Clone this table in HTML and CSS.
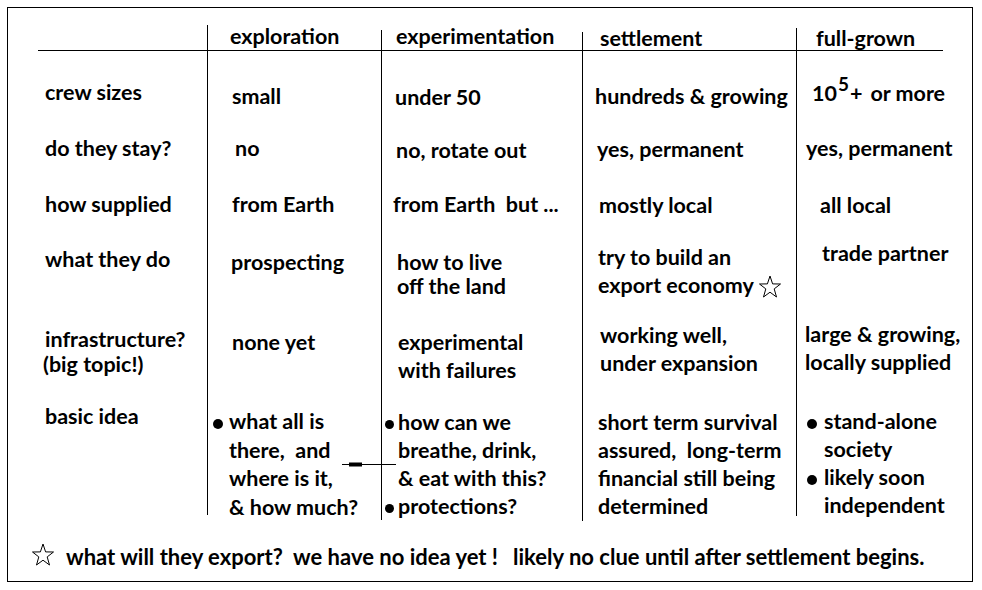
FILE: index.html
```html
<!DOCTYPE html>
<html lang="en">
<head>
<meta charset="utf-8">
<title>Settlement stages</title>
<link rel="stylesheet" href="styles.css">
</head>
<body>
<div class="slide">
  <div class="grid">
    <div class="row head">
      <div class="cell c0"></div>
      <div class="cell c1">exploration</div>
      <div class="cell c2">experimentation</div>
      <div class="cell c3">settlement</div>
      <div class="cell c4">full-grown</div>
    </div>
    <div class="row r1">
      <div class="cell c0">crew sizes</div>
      <div class="cell c1">small</div>
      <div class="cell c2">under 50</div>
      <div class="cell c3">hundreds &amp; growing</div>
      <div class="cell c4">10<sup class="exp">5</sup>+<span class="gap">or more</span></div>
    </div>
    <div class="row r2">
      <div class="cell c0">do they stay?</div>
      <div class="cell c1">no</div>
      <div class="cell c2">no,&nbsp;rotate out</div>
      <div class="cell c3">yes, permanent</div>
      <div class="cell c4">yes, permanent</div>
    </div>
    <div class="row r3">
      <div class="cell c0">how supplied</div>
      <div class="cell c1">from Earth</div>
      <div class="cell c2">from Earth&nbsp; but ...</div>
      <div class="cell c3">mostly local</div>
      <div class="cell c4">all local</div>
    </div>
    <div class="row r4">
      <div class="cell c0">what they do</div>
      <div class="cell c1">prospecting</div>
      <div class="cell c2">how to live<br>off the land</div>
      <div class="cell c3">try to build an<br>export economy<svg class="star star-inline" width="22" height="24" viewBox="0 0 22 24"><polygon points="11,1 13.6,8.9 21.5,9 15.2,13.9 17.5,22 11,17.2 4.5,22 6.8,13.9 0.5,9 8.4,8.9" fill="#fff" stroke="#000" stroke-width="1"/></svg></div>
      <div class="cell c4">trade partner</div>
    </div>
    <div class="row r5">
      <div class="cell c0">infrastructure?<br><span class="aside">(big topic!)</span></div>
      <div class="cell c1">none yet</div>
      <div class="cell c2">experimental<br>with failures</div>
      <div class="cell c3">working well,<br>under expansion</div>
      <div class="cell c4">large &amp; growing,<br>locally supplied</div>
    </div>
    <div class="row r6">
      <div class="cell c0">basic idea</div>
      <div class="cell c1">
        <div class="bl"><span class="dot"></span><span class="bt">what all is<br>there,&nbsp; and<br>where is it,<br>&amp; how much?</span></div>
      </div>
      <div class="cell c2">
        <div class="bl"><span class="dot"></span><span class="bt">how can we<br>breathe, drink,<br>&amp; eat with this?</span></div>
        <div class="bl"><span class="dot"></span><span class="bt">protections?</span></div>
      </div>
      <div class="cell c3">short term survival<br>assured,&nbsp; long-term<br>financial still being<br>determined</div>
      <div class="cell c4">
        <div class="bl"><span class="dot"></span><span class="bt">stand-alone<br>society</span></div>
        <div class="bl"><span class="dot"></span><span class="bt">likely soon<br>independent</span></div>
      </div>
    </div>
    <svg class="arrow" width="56" height="7" viewBox="0 0 56 7"><line x1="0" y1="3.5" x2="54" y2="3.5" stroke="#000" stroke-width="1"/><rect x="7" y="1.5" width="13" height="4" fill="#000"/></svg>
  </div>
  <div class="foot"><svg class="star star-foot" width="22" height="24" viewBox="0 0 22 24"><polygon points="11,1 13.6,8.9 21.5,9 15.2,13.9 17.5,22 11,17.2 4.5,22 6.8,13.9 0.5,9 8.4,8.9" fill="#fff" stroke="#000" stroke-width="1"/></svg><span class="q">what will they export?&nbsp; we have no idea yet !</span><span class="q2">likely no clue until after settlement begins.</span></div>
</div>
</body>
</html>
```

FILE: styles.css
```css
* { box-sizing: border-box; }
html, body { margin: 0; padding: 0; background: #fff; }
body {
  font-family: Lato, "Open Sans", sans-serif;
  font-weight: 700;
  font-size: 21.5px;
  line-height: 28px;
  color: #000;
}
.slide {
  margin: 7px;
  width: 966px;
  height: 575px;
  border: 1px solid #000;
  padding-top: 10px;
}
.grid {
  position: relative;
  margin-left: 30px;
  width: 905px;
  display: grid;
  grid-template-columns: 169px 174px 201px 214px 147px;
  grid-template-rows: 33px 69px 56px 56px 78px 82px 130px;
}
.row { display: contents; }
.cell { white-space: nowrap; }
.c1, .c2, .c3, .c4 {
  background: linear-gradient(#000, #000) left top / 1px 100% no-repeat;
}
.head .cell { border-bottom: 1px solid #000; }
.head .c1 { background-size: 1px 25px; background-position: left bottom; padding: 4px 0 0 23px; }
.head .c2 { background-size: 1px 20px; background-position: left bottom; padding: 4px 0 0 15px; }
.head .c3 { background-size: 1px 18px; background-position: left bottom; padding: 5.5px 0 0 18px; }
.head .c4 { background-size: 1px 22px; background-position: left bottom; padding: 5.5px 0 0 20px; }

.r1 .c0 { padding: 26.5px 0 0 7px; }
.r1 .c1 { padding: 30.5px 0 0 25px; }
.r1 .c2 { padding: 31.5px 0 0 14px; }
.r1 .c3 { padding: 30.5px 0 0 13px; }
.r1 .c4 { padding: 27.5px 0 0 16px; }
.exp { font-size: 0.88em; line-height: 0; vertical-align: 10px; margin-left: 1px; margin-right: 1px; }
.gap { margin-left: 8px; }

.r2 .c0 { padding: 14px 0 0 7px; }
.r2 .c1 { padding: 13.5px 0 0 28px; }
.r2 .c2 { padding: 15.5px 0 0 15px; }
.r2 .c3 { padding: 15px 0 0 15px; }
.r2 .c4 { padding: 14px 0 0 10px; }

.r3 .c0 { padding: 13.5px 0 0 7px; }
.r3 .c1 { padding: 14px 0 0 25px; }
.r3 .c2 { padding: 14px 0 0 12px; }
.r3 .c3 { padding: 15px 0 0 17px; }
.r3 .c4 { padding: 15px 0 0 24px; }

.r4 .c0 { padding: 13px 0 0 7px; }
.r4 .c1 { padding: 16px 0 0 24px; }
.r4 .c2 { padding: 17.5px 0 0 16px; line-height: 24px; }
.r4 .c3 { padding: 10.5px 0 0 16px; }
.r4 .c4 { padding: 6.5px 0 0 26px; }
.star-inline { vertical-align: -6px; margin-left: 5px; }

.r5 .c0 { padding: 17px 0 0 7px; line-height: 25px; }
.aside { margin-left: -2px; }
.r5 .c1 { padding: 17.5px 0 0 25px; }
.r5 .c2 { padding: 17.5px 0 0 17px; }
.r5 .c3 { padding: 11px 0 0 18px; }
.r5 .c4 { padding: 10px 0 0 9px; }

.r6 .c0 { padding: 10px 0 0 7px; }
.r6 .c1 { padding: 15px 0 0 6px; line-height: 28.6px; background-size: 1px 123px; }
.r6 .c2 { padding: 15.5px 0 0 4px; background-size: 1px 128px; }
.r6 .c3 { padding: 15.5px 0 0 16px; background-size: 1px 129px; }
.r6 .c4 { padding: 14.5px 0 0 11px; background-size: 1px 124px; }

.bl { display: flex; align-items: flex-start; }
.dot {
  flex: none;
  width: 10px;
  height: 10px;
  border-radius: 50%;
  background: #000;
  margin-top: 12px;
}
.r6 .c1 .bt { margin-left: 6px; }
.r6 .c2 .dot { width: 9px; height: 9px; }
.r6 .c2 .bt { margin-left: 4px; }
.r6 .c4 .bt { margin-left: 7px; }

.arrow { position: absolute; left: 304px; top: 443px; }

.foot {
  margin-top: 21px;
  padding-left: 24px;
  white-space: nowrap;
  font-size: 22px;
}
.star-foot { vertical-align: -2px; margin-right: 12px; }
.q2 { margin-left: 15px; }
```
